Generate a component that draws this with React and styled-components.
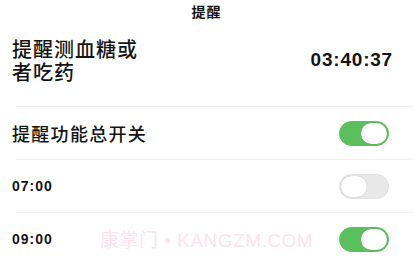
import styled, { createGlobalStyle } from "styled-components";

const Global = createGlobalStyle`
  body {
    margin: 0;
    background: #ffffff;
    font-family: "Noto Sans CJK SC", "Noto Sans", sans-serif;
    color: #141414;
  }
`;

const Page = styled.div`
  width: 413px;
  height: 261px;
  overflow: hidden;
  background: #fff;
  position: relative;
`;

const Header = styled.div`
  height: 22px;
  display: flex;
  align-items: center;
  justify-content: center;
  font-size: 14px;
  font-weight: 700;
  letter-spacing: 1px;
`;

const MainRow = styled.div`
  display: flex;
  align-items: center;
  justify-content: space-between;
  height: 84px;
  padding: 0 20px 0 12px;
`;

const BigTitle = styled.div`
  font-size: 20px;
  line-height: 23px;
  font-weight: 500;
  letter-spacing: 1px;
  width: 130px;
  margin-top: -8px;
`;

const Countdown = styled.div`
  font-family: "Liberation Sans", "Noto Sans", sans-serif;
  font-size: 19px;
  font-weight: 700;
  letter-spacing: 0.8px;
  margin-top: -8px;
`;

const Divider = styled.div`
  height: 1px;
  background: #eeeeee;
  margin-left: 16px;
`;

const Row = styled.div`
  height: 52px;
  display: flex;
  align-items: center;
  justify-content: space-between;
  padding: 0 24px 0 12px;
`;

const Label = styled.div`
  font-size: ${(p) => (p.$big ? "18px" : "14px")};
  font-weight: ${(p) => (p.$big ? 500 : 700)};
  font-family: ${(p) =>
    p.$big ? `"Noto Sans CJK SC", sans-serif` : `"Liberation Sans", "Noto Sans", sans-serif`};
  letter-spacing: ${(p) => (p.$big ? "1.3px" : "1px")};
`;

const Track = styled.div`
  width: 50px;
  height: 25px;
  box-sizing: border-box;
  border-radius: 13px;
  background: ${(p) => (p.$on ? "#5bbf5d" : "#e8e8e8")};
  border: 1px solid ${(p) => (p.$on ? "#5bbf5d" : "#e0e0e0")};
  display: flex;
  align-items: center;
  justify-content: ${(p) => (p.$on ? "flex-end" : "flex-start")};
  padding: 1px;
`;

const Knob = styled.div`
  width: 26px;
  height: 21px;
  border-radius: 11px;
  background: #fff;
  box-shadow: 0 0 1px rgba(0, 0, 0, 0.25);
`;

const Watermark = styled.div`
  position: absolute;
  left: 100px;
  top: 225px;
  font-family: "Liberation Sans", "Noto Sans CJK SC", sans-serif;
  font-size: 19px;
  letter-spacing: 0.5px;
  color: #fde3f0;
  pointer-events: none;
`;

const Toggle = ({ on }) => (
  <Track $on={on}>
    <Knob />
  </Track>
);

export default function App() {
  return (
    <Page>
      <Global />
      <Header>提醒</Header>
      <MainRow>
        <BigTitle>提醒测血糖或者吃药</BigTitle>
        <Countdown>03:40:37</Countdown>
      </MainRow>
      <Divider />
      <Row>
        <Label $big>提醒功能总开关</Label>
        <Toggle on />
      </Row>
      <Divider />
      <Row>
        <Label>07:00</Label>
        <Toggle on={false} />
      </Row>
      <Divider />
      <Row>
        <Label>09:00</Label>
        <Toggle on />
      </Row>
      <Watermark>康掌门 • KANGZM.COM</Watermark>
    </Page>
  );
}
